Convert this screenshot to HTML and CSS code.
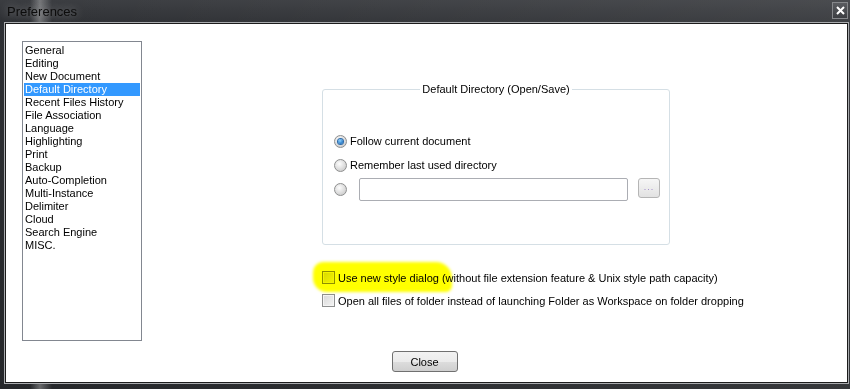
FILE: index.html
```html
<!DOCTYPE html>
<html lang="en">
<head>
    <meta charset="UTF-8">
    <title>Preferences</title>
    <link rel="stylesheet" href="styles.css">
</head>
<body>
    <div class="window">
        <div class="titlebar">
            <span class="title">Preferences</span>
            <span class="close-x">
                <svg width="9" height="9" viewBox="0 0 9 9"><path d="M1 1 L8 8 M8 1 L1 8" stroke="#fff" stroke-width="2"/></svg>
            </span>
        </div>

        <div class="client">
            <div class="content">
                <!-- 左侧分类列表 -->
                <ul class="list">
                    <li>General</li>
                    <li>Editing</li>
                    <li>New Document</li>
                    <li class="selected">Default Directory</li>
                    <li>Recent Files History</li>
                    <li>File Association</li>
                    <li>Language</li>
                    <li>Highlighting</li>
                    <li>Print</li>
                    <li>Backup</li>
                    <li>Auto-Completion</li>
                    <li>Multi-Instance</li>
                    <li>Delimiter</li>
                    <li>Cloud</li>
                    <li>Search Engine</li>
                    <li>MISC.</li>
                </ul>

                <!-- 右侧设置 -->
                <div class="panel">
                    <fieldset class="group">
                        <legend>Default Directory (Open/Save)</legend>
                        <div class="radio-row first">
                            <span class="radio checked"></span>
                            <span>Follow current document</span>
                        </div>
                        <div class="radio-row">
                            <span class="radio"></span>
                            <span>Remember last used directory</span>
                        </div>
                        <div class="radio-row path">
                            <span class="radio"></span>
                            <span class="textbox"></span>
                            <span class="dots">...</span>
                        </div>
                    </fieldset>

                    <div class="checks">
                        <div class="check-row">
                            <span class="marker"></span>
                            <span class="checkbox"></span>
                            <span>Use new style dialog (without file extension feature &amp; Unix style path capacity)</span>
                        </div>
                        <div class="check-row">
                            <span class="checkbox"></span>
                            <span>Open all files of folder instead of launching Folder as Workspace on folder dropping</span>
                        </div>
                    </div>
                </div>
            </div>

            <div class="footer">
                <button class="btn">Close</button>
            </div>
        </div>
    </div>
</body>
</html>
```

FILE: styles.css
```css
body {
    margin: 0;
    padding: 0;
    width: 850px;
    height: 389px;
    overflow: hidden;
    font-family: Tahoma, "Liberation Sans", Arial, sans-serif;
    font-size: 11px;
    color: #000;
    background-color: #2c2e32;
}
.window {
    height: 389px;
    display: flex;
    flex-direction: column;
    background:
        linear-gradient(90deg, rgba(255,255,255,0) 30px, rgba(255,255,255,0.3) 40px, rgba(255,255,255,0) 52px),
        linear-gradient(90deg, rgba(255,255,255,0) 0, rgba(255,255,255,0.08) 100%),
        linear-gradient(180deg, #3b3d41 0, #2e3034 22px, #25272a 389px);
}
.titlebar {
    height: 23px;
    display: flex;
    align-items: center;
    justify-content: space-between;
    padding: 0 2px 0 7px;
}
.title {
    font-family: "Liberation Sans", Arial, sans-serif;
    font-size: 13px;
    color: #0c0c0c;
    text-shadow: 0 0 8px rgba(255,255,255,0.45);
    padding-bottom: 1px;
}
.close-x {
    width: 14px;
    height: 15px;
    border: 1px solid #85878a;
    background: linear-gradient(180deg, #5a5c60, #3c3e42);
    display: flex;
    align-items: center;
    justify-content: center;
    margin-bottom: 2px;
}
.client {
    margin: 0 2px 6px 5px;
    height: 358px;
    background-color: #fff;
    border: 1px solid #1c1c1c;
    box-shadow: 0 0 0 1px #a9abae;
    display: flex;
    flex-direction: column;
}
.content {
    display: flex;
    height: 317px;
}
.list {
    list-style: none;
    margin: 17px 0 0 16px;
    padding: 2px 1px 0 1px;
    width: 116px;
    height: 296px;
    border: 1px solid #828790;
}
.list li {
    height: 13px;
    line-height: 13px;
    padding-left: 1px;
    white-space: nowrap;
}
.list li.selected {
    background-color: #3399ff;
    color: #fff;
}
.panel {
    margin: 59px 0 0 180px;
}
.group {
    margin: 0;
    padding: 0;
    width: 346px;
    height: 160px;
    border: 1px solid #d5dfe5;
    border-radius: 3px;
}
.group legend {
    margin: 0 auto;
    padding: 0 2px;
    line-height: 13px;
}
.radio-row {
    display: flex;
    align-items: center;
    height: 24px;
    margin-left: 11px;
    white-space: nowrap;
}
.radio-row.first {
    margin-top: 33px;
}
.radio {
    width: 11px;
    height: 11px;
    border-radius: 50%;
    border: 1px solid #8e8f8f;
    background: radial-gradient(circle at 40% 35%, #fdfdfd, #d3d3d3 70%, #c4c4c4);
    margin-right: 3px;
    flex: none;
    display: flex;
    align-items: center;
    justify-content: center;
}
.radio.checked::after {
    content: "";
    width: 5px;
    height: 5px;
    border-radius: 50%;
    background: radial-gradient(circle at 40% 35%, #8fd3ff, #1b6fc1 75%);
    box-shadow: 0 0 0 1px #2d6aa8;
}
.textbox {
    width: 267px;
    height: 21px;
    border: 1px solid #abadb3;
    border-radius: 2px;
    margin-left: 9px;
}
.dots {
    width: 20px;
    height: 18px;
    margin-left: 10px;
    border: 1px solid #b5b5b5;
    border-radius: 3px;
    background: linear-gradient(180deg, #f6f6f6, #e2e2e2);
    color: #9c86c8;
    font-size: 9px;
    text-align: center;
    line-height: 16px;
    letter-spacing: 1px;
    margin-top: -2px;
}
.checks {
    margin-top: 21px;
}
.check-row {
    position: relative;
    display: flex;
    align-items: center;
    height: 23px;
    white-space: nowrap;
}
.checkbox {
    width: 11px;
    height: 11px;
    border: 1px solid #8e8f8f;
    background: linear-gradient(135deg, #d8d8d8, #f4f4f4);
    box-shadow: inset 0 0 0 1px #f4f4f4;
    margin-right: 3px;
    flex: none;
}
.marker {
    position: absolute;
    left: -9px;
    top: -4px;
    width: 139px;
    height: 30px;
    background: #ffff00;
    border-radius: 10px 16px 6px 14px;
    filter: blur(1.5px);
    mix-blend-mode: multiply;
    z-index: 1;
}
.footer {
    display: flex;
    justify-content: center;
    padding: 10px 4px 0 0;
}
.btn {
    width: 66px;
    height: 21px;
    font-family: inherit;
    font-size: 11px;
    color: #000;
    border: 1px solid #707070;
    border-radius: 3px;
    background: linear-gradient(180deg, #f2f2f2 0, #ebebeb 50%, #dddddd 51%, #cfcfcf 100%);
    padding: 0;
}
```
